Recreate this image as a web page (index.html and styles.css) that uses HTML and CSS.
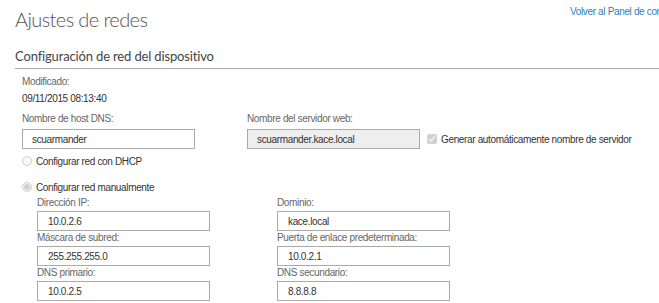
FILE: index.html
```html
<!doctype html>
<html>
    <head>
        <link rel="stylesheet" href="styles.css">
    </head>
    <body>
        <div class="top">
            <h1 class="title">Ajustes de redes</h1>
            <a class="back" href="#">Volver al Panel de control</a>
        </div>
        <h2 class="section">Configuración de red del dispositivo</h2>
        <div class="content">
            <div class="lbl mod">Modificado:</div>
            <div class="stamp">09/11/2015 08:13:40</div>

            <div class="hostrow">
                <div class="field">
                    <div class="lbl">Nombre de host DNS:</div>
                    <input class="box" type="text" value="scuarmander">
                </div>
                <div class="field">
                    <div class="lbl">Nombre del servidor web:</div>
                    <input class="box ro" type="text" value="scuarmander.kace.local" readonly>
                </div>
                <label class="auto"><input type="checkbox" checked disabled> Generar automáticamente nombre de servidor</label>
            </div>

            <label class="opt"><input type="radio" name="mode" disabled> Configurar red con DHCP</label>
            <label class="opt manual"><input type="radio" name="mode" checked disabled> Configurar red manualmente</label>

            <div class="netgrid">
                <div class="field">
                    <div class="lbl">Dirección IP:</div>
                    <input class="box" type="text" value="10.0.2.6">
                </div>
                <div class="field">
                    <div class="lbl">Dominio:</div>
                    <input class="box" type="text" value="kace.local">
                </div>
                <div class="field">
                    <div class="lbl">Máscara de subred:</div>
                    <input class="box" type="text" value="255.255.255.0">
                </div>
                <div class="field">
                    <div class="lbl">Puerta de enlace predeterminada:</div>
                    <input class="box" type="text" value="10.0.2.1">
                </div>
                <div class="field">
                    <div class="lbl">DNS primario:</div>
                    <input class="box" type="text" value="10.0.2.5">
                </div>
                <div class="field">
                    <div class="lbl">DNS secundario:</div>
                    <input class="box" type="text" value="8.8.8.8">
                </div>
            </div>
        </div>
    </body>
</html>
```

FILE: styles.css
```css
body
{
    margin: 0;
    font-family: "Liberation Sans", Arial, sans-serif;
    font-size: 10px;
    letter-spacing: -0.35px;
    color: #333;
    background: #fff;
    overflow: hidden;
}
.top
{
    display: flex;
    align-items: flex-start;
    padding-left: 15px;
    white-space: nowrap;
}
.title
{
    flex: 0 0 555px;
    margin: 4px 0 0 0;
    font-family: Lato, sans-serif;
    font-weight: 300;
    font-size: 20px;
    letter-spacing: -0.6px;
    color: #555;
    line-height: 30px;
}
.back
{
    margin-top: 6px;
    color: #2a7fc1;
    text-decoration: none;
}
.section
{
    margin: 13px 0 0 15px;
    font-family: Lato, sans-serif;
    font-weight: 400;
    font-size: 13px;
    letter-spacing: -0.15px;
    color: #444;
    line-height: 18px;
    padding-bottom: 3px;
    border-bottom: 1px solid #aaa;
}
.content
{
    padding: 4px 0 0 22px;
}
.lbl
{
    color: #666;
    line-height: 14px;
}
.mod
{
    line-height: 17px;
}
.stamp
{
    line-height: 17px;
    margin-bottom: 5px;
}
.hostrow
{
    display: flex;
    align-items: flex-end;
    gap: 52px;
}
.field
{
    display: flex;
    flex-direction: column;
}
.box
{
    box-sizing: border-box;
    width: 173px;
    height: 20px;
    margin: 3px 0 0 0;
    padding: 0 9px;
    border: 1px solid #aaa;
    font-family: inherit;
    font-size: 10px;
    letter-spacing: -0.35px;
    color: #333;
}
.ro
{
    background: #eee;
}
.auto
{
    margin-left: -45px;
    height: 20px;
    display: flex;
    align-items: center;
    gap: 4px;
    white-space: nowrap;
}
.opt
{
    display: flex;
    align-items: center;
    gap: 4px;
    margin-top: 5px;
    height: 14px;
}
.manual
{
    margin-top: 12px;
}
.opt input, .auto input
{
    margin: 0;
    width: 10px;
    height: 10px;
}
.netgrid
{
    display: grid;
    grid-template-columns: 173px 173px;
    column-gap: 67px;
    padding-left: 15px;
    margin-top: 2px;
}
.netgrid .lbl
{
    line-height: 13px;
}
.netgrid .box
{
    margin-top: 2px;
    padding: 0 10px;
}
```
